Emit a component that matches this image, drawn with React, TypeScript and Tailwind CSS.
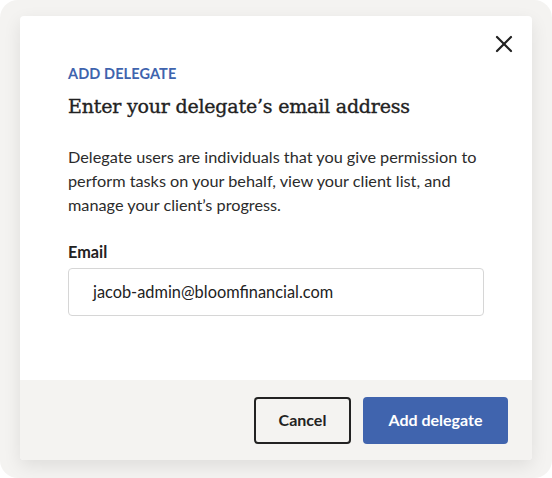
import { X } from "lucide-react";

export default function App() {
  return (
    <div className="h-[478px] w-[552px] bg-white font-['Lato',sans-serif]">
      <div className="flex h-full w-full flex-col rounded-[18px] bg-[#f4f3f1] px-5 pt-4 pb-[18px]">
        <div className="flex flex-1 flex-col overflow-hidden rounded-[4px] bg-white shadow-[0_6px_18px_rgba(0,0,0,0.09)]">
          <div className="relative flex-1 px-12 pt-[48px]">
            <button
              type="button"
              aria-label="Close"
              className="absolute top-[12px] right-[12px] flex h-8 w-8 items-center justify-center text-[#222]"
            >
              <X size={28} strokeWidth={1.9} />
            </button>
            <p className="text-[14.5px] leading-5 font-bold tracking-[0.1px] text-[#3f64ae] uppercase">
              Add delegate
            </p>
            <h2 className="mt-[8px] font-['DejaVu_Serif',serif] text-[19px] leading-7 font-normal tracking-[-0.2px] text-[#222] [-webkit-text-stroke:0.35px_#222]">
              Enter your delegate’s email address
            </h2>
            <p className="mt-[25px] text-[16.25px] leading-6 text-[#2b2b2b]">
              Delegate users are individuals that you give permission to perform tasks on your
              behalf, view your client list, and manage your client’s progress.
            </p>
            <label className="mt-[23px] block text-[16.25px] leading-6 font-bold text-[#222]">Email</label>
            <div className="mt-[4px] flex h-[48px] items-center rounded-[4px] border border-[#d6d6d6] px-6 text-[16.35px] text-[#222]">
              jacob-admin@bloomfinancial.com
            </div>
          </div>
          <div className="flex h-[80px] items-center justify-end gap-3 bg-[#f4f3f1] pr-6">
            <button
              type="button"
              className="h-[47px] w-[97px] rounded-[4px] border-2 border-[#222] text-[16px] font-bold text-[#222]"
            >
              Cancel
            </button>
            <button
              type="button"
              className="h-[47px] w-[145px] rounded-[4px] bg-[#4064ae] text-[16px] font-bold text-white"
            >
              Add delegate
            </button>
          </div>
        </div>
      </div>
    </div>
  );
}
